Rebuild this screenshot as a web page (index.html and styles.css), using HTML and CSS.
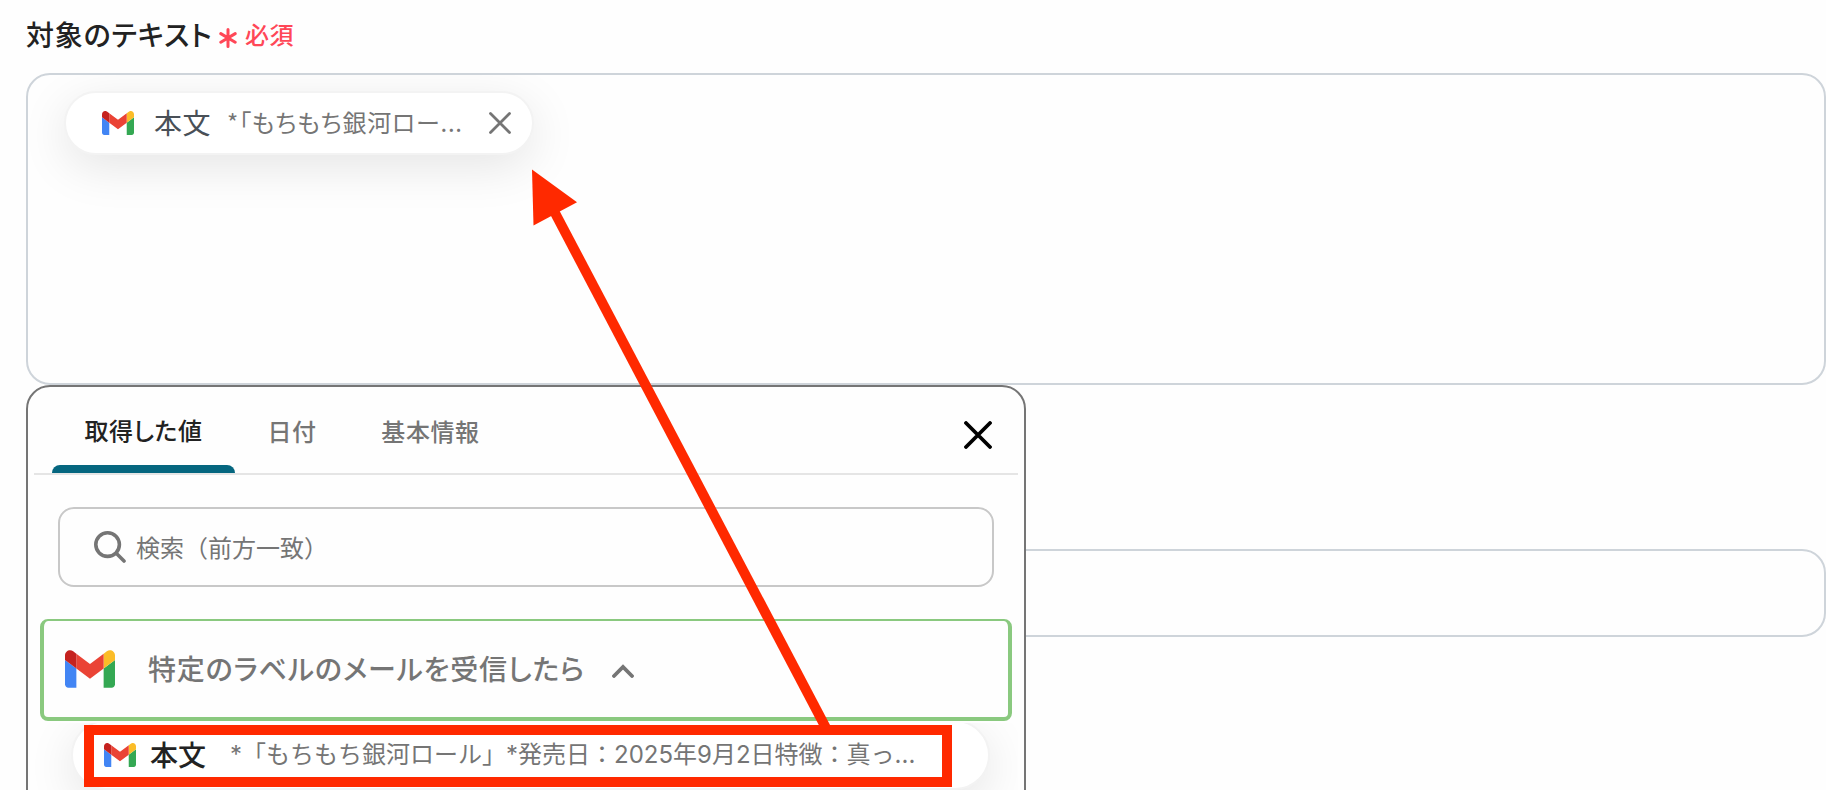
FILE: index.html
```html
<!DOCTYPE html>
<html lang="ja">
<head>
<meta charset="utf-8">
<title>対象のテキスト</title>
<link rel="stylesheet" href="styles.css">
</head>
<body>
<svg class="defs" width="0" height="0">
  <symbol id="gmail" viewBox="52 42 88 66">
    <path fill="#4285f4" d="M58 108h14V74L52 59v43c0 3.32 2.69 6 6 6"/>
    <path fill="#34a853" d="M120 108h14c3.32 0 6-2.69 6-6V59l-20 15"/>
    <path fill="#fbbc28" d="M120 48v26l20-15v-8c0-7.42-8.47-11.65-14.4-7.2"/>
    <path fill="#ea4335" d="M72 74V48l24 18 24-18v26L96 92"/>
    <path fill="#c5221f" d="M52 51v8l20 15V48l-5.6-4.2c-5.94-4.45-14.4-.22-14.4 7.2"/>
  </symbol>
</svg>
<main class="form">
  <div class="label">
    <span class="label-text">対象のテキスト</span>
    <svg class="label-star" viewBox="0 0 18 20"><path d="M9 1.5v17M1.8 5.6l14.4 8.6M16.2 5.6L1.8 14.2"/></svg>
    <span class="label-required">必須</span>
  </div>
  <div class="textbox">
    <div class="chip">
      <svg class="mail"><use href="#gmail"/></svg>
      <span class="chip-name">本文</span>
      <span class="chip-value">*「もちもち銀河ロー...</span>
      <svg class="chip-close" viewBox="0 0 24 24"><path d="M2.500 2.500l19 19M21.500 2.500l-19 19"/></svg>
    </div>
  </div>
  <div class="field"></div>
</main>
<section class="panel">
  <header class="tabs">
    <div class="tab tab-active"><span>取得した値</span></div>
    <div class="tab tab-date"><span>日付</span></div>
    <div class="tab tab-info"><span>基本情報</span></div>
    <svg class="panel-close" viewBox="0 0 28 28"><path d="M2 2l24 24M26 2L2 26"/></svg>
  </header>
  <div class="search">
    <svg class="search-icon" viewBox="0 0 32 32"><circle cx="13.6" cy="13.6" r="11.8"/><path d="M22.500 22.500l7.500 7.500"/></svg>
    <span class="search-text">検索（前方一致）</span>
  </div>
  <div class="group">
    <svg class="mail-large"><use href="#gmail"/></svg>
    <span class="group-name">特定のラベルのメールを受信したら</span>
    <svg class="chevron" viewBox="0 0 22 14"><path d="M2 12l9-9 9 9"/></svg>
  </div>
  <div class="results">
    <div class="result">
      <svg class="mail"><use href="#gmail"/></svg>
      <span class="result-name">本文</span>
      <span class="result-value">*「もちもち銀河ロール」*発売日：2025年9月2日特徴：真っ...</span>
    </div>
  </div>
</section>
<div class="highlight"></div>
<svg class="arrow" viewBox="0 0 1826 790">
  <path class="arrow-shaft" d="M554 211L826 728"/>
  <path class="arrow-head" d="M532 169.500L577 202.300L533.500 225.500Z"/>
</svg>
</body>
</html>
```
FILE: styles.css
```css
* { box-sizing: border-box; }
body {
  margin: 0;
  width: 1826px;
  height: 790px;
  overflow: hidden;
  position: relative;
  background: #fefefe;
  color: #222;
  font-family: "Noto Sans CJK JP", sans-serif;
  white-space: nowrap;
}
svg { display: block; flex: none; fill: none; stroke-linecap: round; }
.defs { position: absolute; }
.form { padding-left: 26px; }
.label { display: flex; align-items: center; height: 73px; padding-bottom: 6px; }
.label-text {
  font-size: 28px;
  font-weight: 500;
  font-feature-settings: "palt";
  letter-spacing: 0.85px;
  width: 193px;
}
.label-star { width: 18px; height: 20px; margin-top: 9px; stroke: #ff4757; stroke-width: 3; }
.label-required { margin-left: 8px; font-size: 24px; font-weight: 500; color: #ff4757; letter-spacing: 0.6px; }
.textbox {
  height: 312px;
  border: 2px solid #ced4da;
  border-radius: 24px;
  padding: 16px 36px;
  overflow: hidden;
}
.chip {
  display: flex;
  align-items: center;
  width: 470px;
  height: 64px;
  padding-left: 36px;
  border: 2px solid #f3f3f3;
  border-radius: 32px;
  background: #fff;
  box-shadow: 0 12px 48px rgba(0, 0, 0, 0.1);
}
.mail { width: 32px; height: 24px; }
.chip-name { width: 73px; margin: 0 0 2px 20px; font-size: 28px; color: #495057; letter-spacing: 0.5px; }
.chip-value {
  width: 258px;
  margin-bottom: 3px;
  font-size: 24px;
  color: #757575;
  font-feature-settings: "palt";
  letter-spacing: 0.75px;
}
.chip-close { width: 24px; height: 24px; margin-left: 3px; stroke: #757575; stroke-width: 2.8; }
.field { height: 88px; margin-top: 164px; border: 2px solid #ced4da; border-radius: 24px; }
.panel {
  position: absolute;
  left: 26px;
  top: 385px;
  width: 1000px;
  height: 430px;
  border: 2px solid #757575;
  border-radius: 24px;
  background: #fefefe;
  padding: 0 6px;
}
.tabs { display: flex; height: 88px; border-bottom: 2px solid #e5e5e5; padding-left: 18px; }
.tab {
  display: flex;
  align-items: center;
  justify-content: center;
  height: 86px;
  font-size: 24px;
  font-weight: 500;
  color: #757575;
  font-feature-settings: "palt";
  letter-spacing: 0.6px;
}
.tab-active { flex-direction: column; width: 183px; color: #222; }
.tab-active span { margin-top: auto; margin-bottom: 17px; line-height: 36px; }
.tab-active::after { content: ""; width: 183px; height: 8px; border-radius: 8px 8px 0 0; background: #05667f; }
.tab-date { width: 114px; }
.tab-info { width: 163px; }
.panel-close { width: 28px; height: 28px; margin: 34px 0 0 452px; stroke: #000; stroke-width: 3.8; }
.search {
  display: flex;
  align-items: center;
  height: 80px;
  margin: 32px 24px 0;
  border: 2px solid #c8c8c8;
  border-radius: 16px;
  padding-left: 34px;
  font-size: 24px;
  color: #757575;
}
.search-icon { width: 32px; height: 32px; margin-right: 10px; stroke: #757575; stroke-width: 3.6; }
.search-text { margin-bottom: 2px; }
.group {
  display: flex;
  align-items: center;
  width: 972px;
  height: 102px;
  margin: 32px 6px 0;
  border: 4px solid #8ac97f;
  border-top-width: 2px;
  border-radius: 8px;
  padding-left: 21px;
}
.mail-large { width: 50px; height: 38px; }
.group-name {
  width: 464px;
  margin: 0 0 3px 33px;
  font-size: 28px;
  font-weight: 500;
  color: #757575;
  font-feature-settings: "palt";
  letter-spacing: 0.84px;
}
.chevron { width: 22px; height: 14px; margin-top: 3px; stroke: #757575; stroke-width: 3.8; }
.results { height: 92px; margin-top: 2px; padding-left: 37px; overflow: hidden; }
.result {
  display: flex;
  align-items: center;
  width: 919px;
  height: 70px;
  margin-top: -3px;
  padding-left: 31px;
  border: 2px solid #f3f3f3;
  border-radius: 35px;
  background: #fff;
  box-shadow: 0 12px 48px rgba(0, 0, 0, 0.1);
}
.result-name { width: 80px; margin: 0 0 2px 14px; font-size: 28px; font-weight: 500; }
.result-value { margin-bottom: 5px; font-family: Inter, "Noto Sans CJK JP", sans-serif; font-size: 24px; color: #757575; }
.highlight {
  position: absolute;
  left: 84px;
  top: 725px;
  width: 868px;
  height: 62px;
  border: 10px solid #ff2900;
}
.arrow { position: absolute; left: 0; top: 0; width: 1826px; height: 790px; }
.arrow-shaft { stroke: #ff2900; stroke-width: 10; stroke-linecap: butt; }
.arrow-head { fill: #ff2900; }
```
